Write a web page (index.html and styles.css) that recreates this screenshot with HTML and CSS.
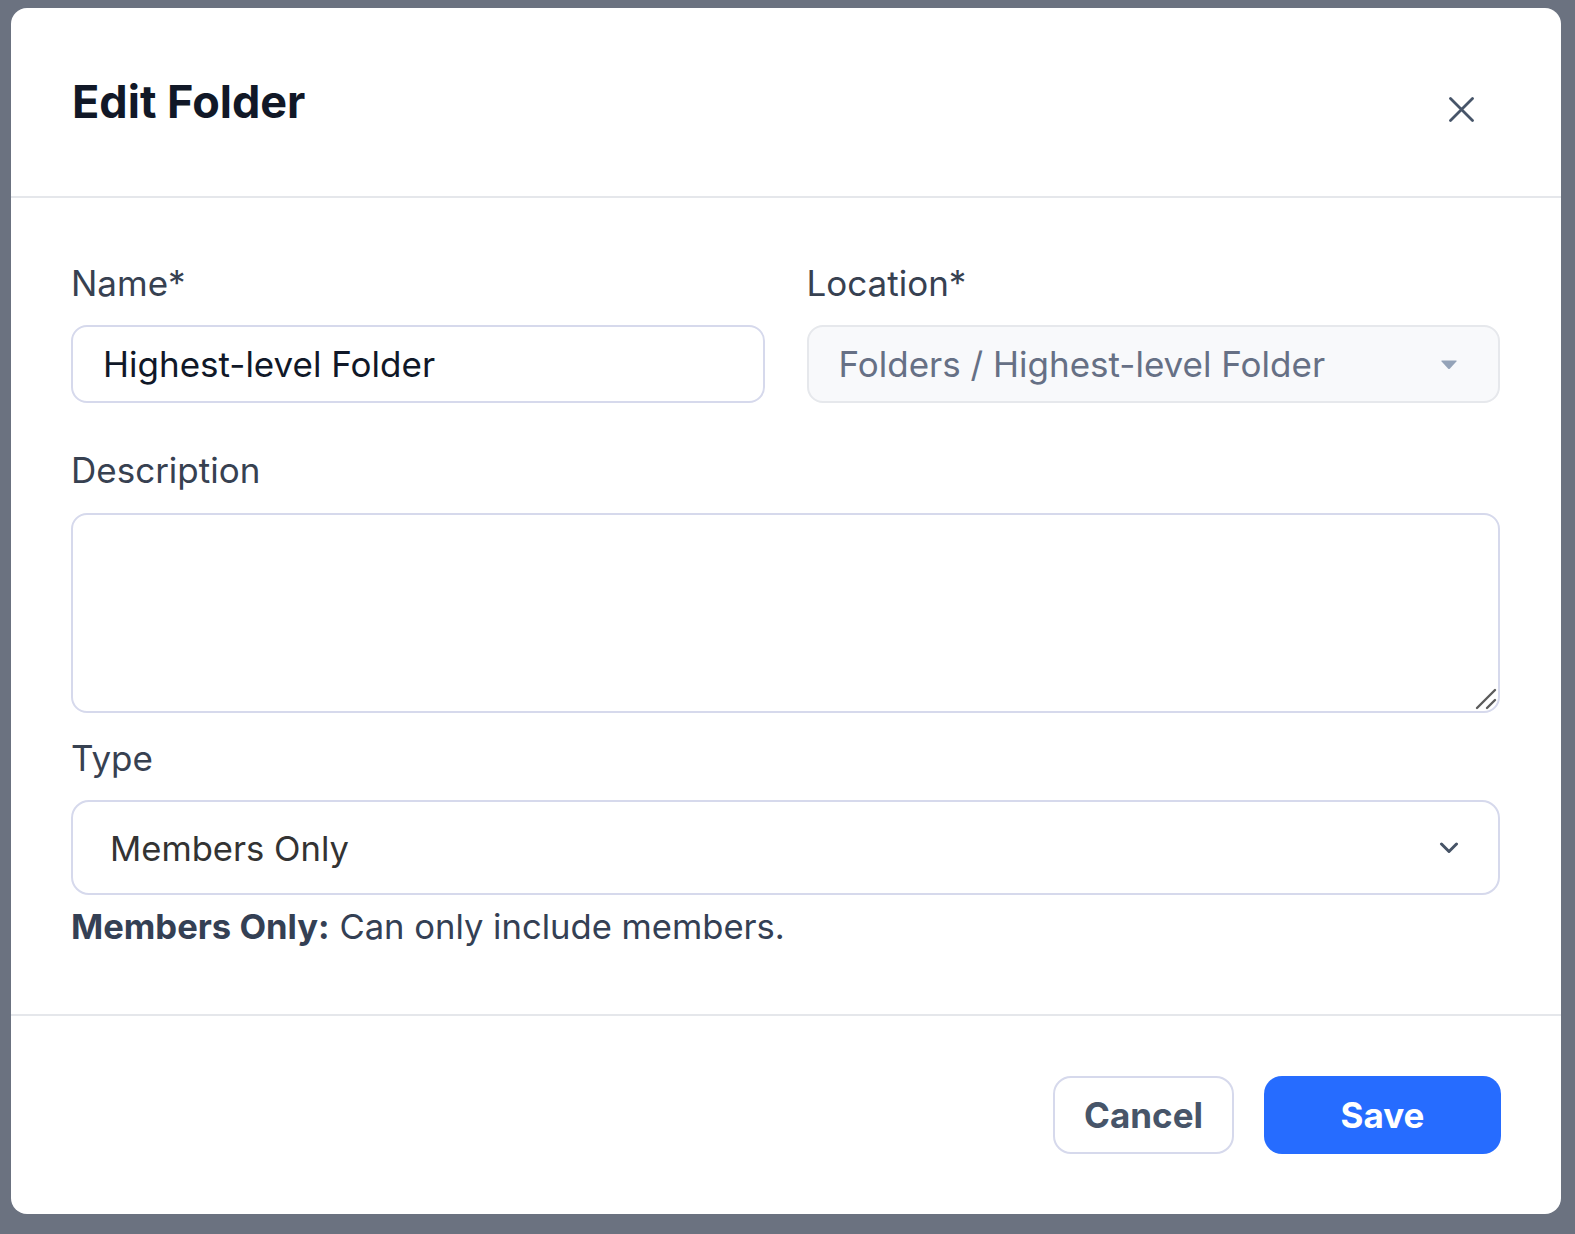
FILE: index.html
```html
<!DOCTYPE html>
<html lang="en">
<head>
<meta charset="utf-8">
<title>Edit Folder</title>
<link rel="stylesheet" href="styles.css">
</head>
<body>
<div class="modal">
  <div class="modal-header">
    <h2 class="modal-title">Edit Folder</h2>
    <button class="close-btn" aria-label="Close">
      <svg width="25" height="25" viewBox="0 0 25 25"><path d="M1.5 1.5 L23.5 23.5 M23.5 1.5 L1.5 23.5" stroke="#475569" stroke-width="2.8" stroke-linecap="round" fill="none"/></svg>
    </button>
  </div>
  <div class="modal-body">
    <div class="row-two">
      <div class="field">
        <label class="label">Name*</label>
        <div class="input">Highest-level Folder</div>
      </div>
      <div class="field">
        <label class="label">Location*</label>
        <div class="input input-disabled">
          <span>Folders / Highest-level Folder</span>
          <svg class="caret" width="18" height="11" viewBox="0 0 18 11"><path d="M2 1.5 H16 Q17.2 1.5 16.4 2.6 L10 9.6 Q9 10.6 8 9.6 L1.6 2.6 Q0.8 1.5 2 1.5 Z" fill="#94a3b8"/></svg>
        </div>
      </div>
    </div>
    <div class="field field-desc">
      <label class="label">Description</label>
      <div class="textarea-wrap">
        <textarea class="textarea"></textarea>
        <svg class="resizer" width="22" height="22" viewBox="0 0 22 22"><path d="M2 20 L20 2 M12 20 L20 12" stroke="#5b5b5b" stroke-width="2.4" stroke-linecap="round" fill="none"/></svg>
      </div>
    </div>
    <div class="field field-type">
      <label class="label">Type</label>
      <div class="select">
        <span>Members Only</span>
        <svg class="chevron" width="20" height="12" viewBox="0 0 20 12"><path d="M2.5 2 L10 9.5 L17.5 2" stroke="#475467" stroke-width="3" stroke-linecap="round" stroke-linejoin="round" fill="none"/></svg>
      </div>
      <p class="help"><strong>Members Only:</strong> Can only include members.</p>
    </div>
  </div>
  <div class="modal-footer">
    <button class="btn btn-cancel">Cancel</button>
    <button class="btn btn-save">Save</button>
  </div>
</div>
</body>
</html>
```

FILE: styles.css
```css
html, body {
  margin: 0;
  padding: 0;
}
body {
  background: #6b7280;
  width: 1575px;
  height: 1234px;
  padding: 8px 0 0 11px;
  box-sizing: border-box;
  font-family: Inter, "Noto Sans", sans-serif;
  overflow: hidden;
}
.modal {
  width: 1550px;
  background: #ffffff;
  border-radius: 16px;
  box-sizing: border-box;
}
.modal-header {
  height: 190px;
  box-sizing: border-box;
  border-bottom: 2px solid #e5e7eb;
  display: flex;
  align-items: center;
  justify-content: space-between;
  padding: 0 87px 0 61px;
}
.modal-title {
  margin: 0;
  font-size: 45px;
  font-weight: 700;
  color: #111827;
  line-height: 1.2;
}
.close-btn {
  border: 0;
  background: transparent;
  padding: 0;
  margin-top: 14px;
  width: 25px;
  height: 25px;
  display: block;
}
.close-btn svg { display: block; }
.modal-body {
  padding: 60px 61px 62px 60px;
}
.row-two {
  display: grid;
  grid-template-columns: 1fr 1fr;
  gap: 42px;
}
.field {
  display: flex;
  flex-direction: column;
}
.label {
  font-size: 35px;
  line-height: 51px;
  color: #374151;
  margin-bottom: 16px;
}
.input {
  height: 78px;
  box-sizing: border-box;
  border: 2px solid #d6d9ec;
  border-radius: 16px;
  padding: 0 30px;
  font-size: 35px;
  color: #101828;
  display: flex;
  align-items: center;
  justify-content: space-between;
}
.input-disabled {
  background: #f8f9fb;
  border-color: #e6e8ec;
  color: #667085;
  padding-right: 40px;
}
.caret { display: block; }
.field-desc {
  margin-top: 42px;
}
.field-desc .label { margin-bottom: 17px; }
.textarea-wrap {
  position: relative;
  height: 200px;
}
.textarea {
  display: block;
  width: 100%;
  height: 200px;
  box-sizing: border-box;
  border: 2px solid #d6d9ec;
  border-radius: 16px;
  resize: none;
  font-family: inherit;
  font-size: 35px;
  padding: 20px 30px;
  outline: none;
}
.resizer {
  position: absolute;
  right: 3px;
  bottom: 3px;
}
.field-type {
  margin-top: 20px;
}
.select {
  height: 95px;
  box-sizing: border-box;
  border: 2px solid #d6d9ec;
  border-radius: 18px;
  padding: 0 39px 0 37px;
  font-size: 34.6px;
  color: #333333;
  display: flex;
  align-items: center;
  justify-content: space-between;
}
.chevron { display: block; }
.help {
  margin: 6px 0 0;
  font-size: 34.6px;
  line-height: 51px;
  color: #344054;
}
.help strong { font-weight: 700; }
.modal-footer {
  border-top: 2px solid #e5e7eb;
  height: 200px;
  box-sizing: border-box;
  display: flex;
  align-items: center;
  justify-content: flex-end;
  gap: 30px;
  padding: 0 60px;
}
.btn {
  height: 78px;
  box-sizing: border-box;
  border-radius: 18px;
  font-family: inherit;
  font-size: 35px;
  font-weight: 700;
  cursor: pointer;
}
.btn-cancel {
  width: 181px;
  background: #ffffff;
  border: 2px solid #d6d9ec;
  color: #475569;
}
.btn-save {
  width: 237px;
  background: #266cff;
  border: 0;
  color: #ffffff;
}
```
